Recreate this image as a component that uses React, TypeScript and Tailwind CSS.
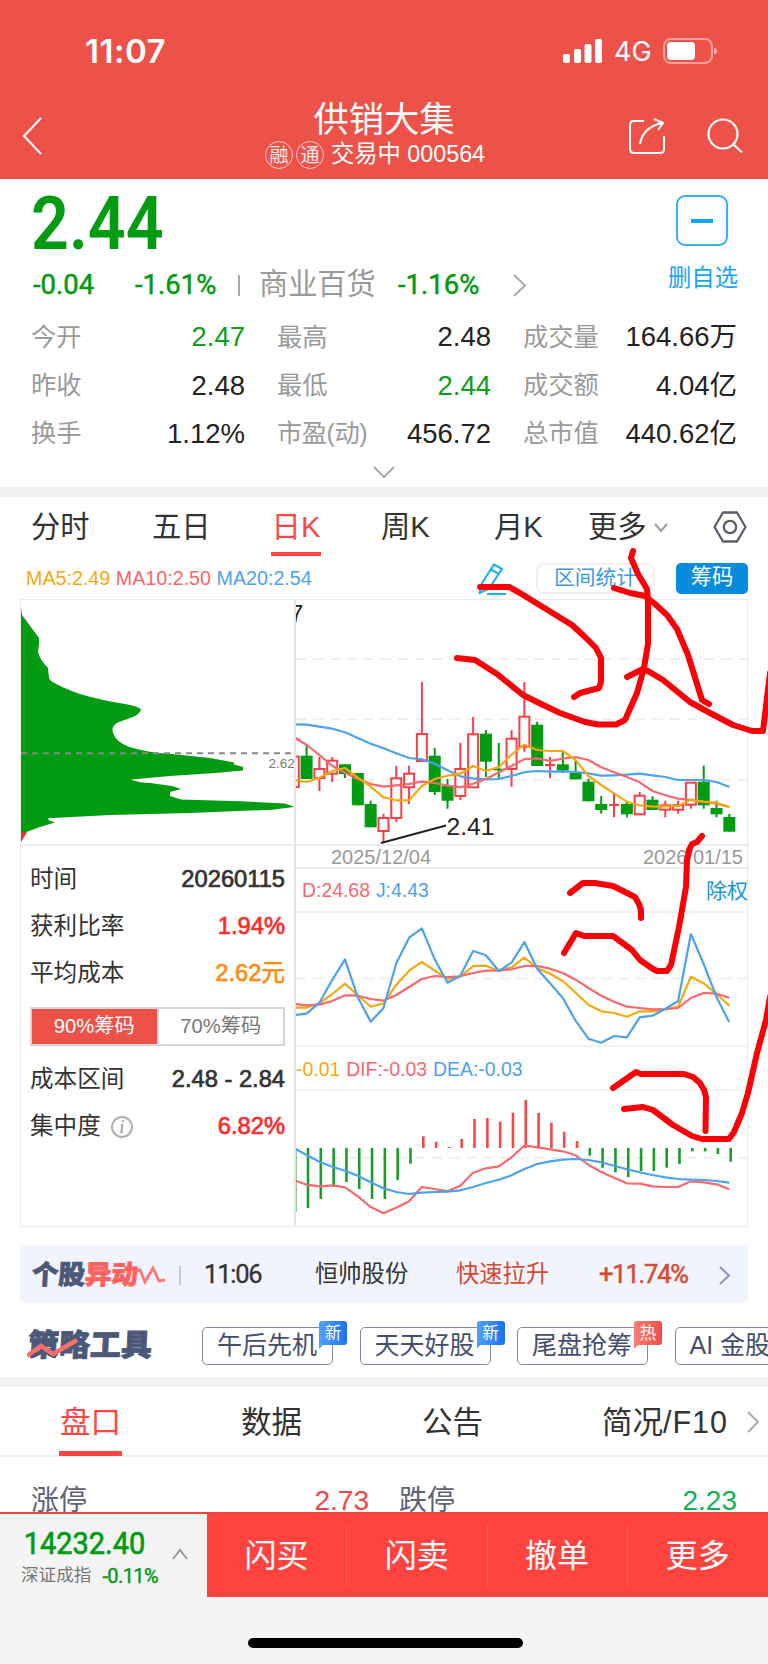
import type { ReactNode } from 'react';
import { clsx } from 'clsx';

const STEP = 12.81;
const FIRST_X = 306.6;

type Candle = [up: boolean, high: number, top: number, bottom: number, low: number];

const candles: Candle[] = [
  [true, 756.6, 756.6, 787, 787],
  [false, 745, 755.7, 779, 779],
  [true, 757, 769, 778, 791],
  [true, 757, 760.7, 773.7, 782],
  [false, 764.3, 764.3, 774, 778],
  [false, 773, 773, 805.3, 805.3],
  [false, 800.7, 804, 827.3, 827.3],
  [true, 814, 818, 831, 843],
  [true, 765.7, 778.3, 818, 822],
  [true, 765.7, 773.7, 787.3, 804],
  [true, 682, 734, 761, 761],
  [false, 748, 755.7, 792, 795],
  [false, 779, 786, 800.7, 808.7],
  [true, 743, 769, 796, 799.7],
  [true, 717, 734.3, 787.3, 787.3],
  [false, 730, 733.7, 761.7, 777],
  [false, 743, 768.7, 770.3, 779],
  [true, 730, 738.7, 769, 786.7],
  [true, 682, 716.7, 746.7, 751.7],
  [false, 721.7, 724.7, 766, 766],
  [true, 756.7, 765, 765, 778],
  [false, 751.7, 764.3, 770.7, 773],
  [false, 760.7, 773, 779.3, 779.3],
  [false, 778.7, 781.7, 801.3, 801.3],
  [false, 796, 804, 810, 813.7],
  [true, 793.3, 805, 805, 817.3],
  [false, 801.7, 804, 814.3, 817.3],
  [true, 792, 795.7, 814.3, 814.3],
  [false, 796.3, 799.7, 810, 810],
  [true, 800.7, 805.3, 809.7, 817.3],
  [true, 800.7, 805.3, 809.7, 813.7],
  [true, 782.3, 782.7, 804.7, 808.7],
  [false, 765.7, 781.7, 805.3, 808.7],
  [false, 800.7, 808, 814.3, 817.3],
  [false, 814, 817, 831.7, 831.7],
];

const ma20 = [724.3, 724.7, 726.7, 728.7, 732.3, 738, 743.7, 748.3, 753.3, 758, 759.3, 763.7, 770.3, 776.3, 778.3, 779.3, 779, 776, 772.2, 771, 771.7, 771.3, 772, 773.3, 775.7, 775.3, 774.7, 773.7, 775.3, 777, 780, 780, 780, 782, 787];
const ma10 = [737, 745, 755, 765.7, 772.7, 779, 784, 786.7, 785.3, 784, 781.7, 783, 785.7, 787.3, 783.7, 779, 772.3, 766, 759.2, 758.3, 761, 758.7, 757, 760, 767.3, 772.3, 777, 782.3, 791, 795.3, 798.7, 800, 802, 803.7, 807];
const ma5 = [780, 782, 777.7, 771, 768, 777.7, 786.7, 797.3, 800.3, 800.3, 786, 779, 775.7, 773.7, 766, 771, 767, 754.7, 744.7, 750, 751, 751, 760, 776, 785, 793.3, 801.7, 805.3, 806.7, 806.3, 806, 799.7, 801.7, 802.7, 807];

const lineK = [1007.7, 1007.7, 1003.3, 994, 983.7, 995.3, 1006.7, 1003.3, 984.7, 970.7, 962, 970.7, 979, 976.7, 966, 965.7, 971, 967.3, 957.7, 968, 973.7, 981, 992.7, 1004.7, 1011.3, 1013, 1016.7, 1011.3, 1011.3, 1009.3, 1006.7, 976.7, 983.3, 994, 1005.7];
const lineD = [1004, 1005.3, 1004.7, 1001, 995.3, 995.7, 999, 1000.7, 995, 987, 979, 976, 977, 976.3, 973, 970.7, 970.7, 969.3, 966, 966, 968.7, 973, 979.7, 988, 995.7, 1001.7, 1006.7, 1008, 1009.3, 1009, 1008, 998, 993, 993.7, 997.7];
const lineJ = [1015, 1013.7, 1002.7, 980, 959.3, 997.3, 1021.7, 1008, 963.3, 937.7, 928.3, 959.3, 982.7, 975.7, 951, 955.3, 971, 962.7, 942, 968.7, 983.3, 998, 1020.7, 1038.7, 1042.7, 1036, 1037.3, 1017.3, 1015.7, 1008.7, 1001.3, 934, 964, 997, 1022.3];

const dif = [1180, 1184.7, 1186.3, 1185.3, 1187.3, 1196.3, 1207, 1213.3, 1207.7, 1201.3, 1187, 1189, 1191.3, 1185.7, 1172.7, 1168.3, 1166.3, 1157.3, 1145.5, 1147.3, 1149.3, 1151.3, 1155.3, 1164.7, 1172, 1177.7, 1183.3, 1183.7, 1186.3, 1187, 1187, 1181.3, 1182.3, 1184.3, 1189.3];
const dea = [1148, 1155, 1161.7, 1166.7, 1170.7, 1175.7, 1182.3, 1188.3, 1192, 1194, 1192.7, 1192, 1191.7, 1190.3, 1187, 1183, 1179.7, 1175.3, 1169, 1164, 1161.3, 1159.7, 1159, 1160, 1162.3, 1165.7, 1169.3, 1172.3, 1175, 1177.3, 1179, 1179.7, 1180, 1181, 1182.7];
const macd = [1212, 1208, 1199, 1187, 1182, 1189, 1199, 1199, 1180, 1163.7, 1136.3, 1141.7, 1147, 1139, 1119, 1118, 1121.7, 1112.7, 1100, 1113, 1122.7, 1131.7, 1141, 1155.7, 1167.7, 1172.3, 1177, 1171, 1171, 1167.7, 1164, 1151.3, 1151.3, 1154, 1161.7];

const MACD_ZERO = 1148;

const xAt = (i: number) => FIRST_X + (i - 1) * STEP;
const toPoints = (ys: number[]) => ys.map((y, i) => `${xAt(i).toFixed(1)},${y}`).join(' ');

const doodles = [
  '480,587 509,587 520,593 572,625 585,637 596,648 601,658 601,682 599,688 580,693 574,697',
  '457,658 475,660 497,674 523,695 537,702 560,713 585,722 598,724.5 616,724.5 625,720 637,693 644,668 648,644 648,600 647,589 638,574 631,558 633,551',
  '614,588 630,593 645,596 655,604 667,615 677,629 688,655 702,700 709,704',
  '627,677 642,669.5 648,671 663,680 690,702 710,713 733,725 752,731 763,731 770,673',
  '570,893 583,883 595,883 613,886 623,891 635,897 639,904 641,910 641,918',
  '564,953 576,933 584,936 613,936 632,950 640,960 653,969 657,971 667,971 671,965 679,927 686,887 687,860 689,850 692,844 697,842 702,836',
  '613,1088 636,1072 641,1074 684,1074 693,1077 700,1083 704,1090 706,1097 705.5,1131',
  '624,1109 643,1107 653,1110 673,1125 692,1136 702,1139 729,1139 734,1132 742,1113 748,1093 757,1053 766,1020 770,997',
];

const quotes = [
  [
    { label: '今开', value: '2.47', green: true },
    { label: '最高', value: '2.48' },
    { label: '成交量', value: '164.66万' },
  ],
  [
    { label: '昨收', value: '2.48' },
    { label: '最低', value: '2.44', green: true },
    { label: '成交额', value: '4.04亿' },
  ],
  [
    { label: '换手', value: '1.12%' },
    { label: '市盈(动)', value: '456.72' },
    { label: '总市值', value: '440.62亿' },
  ],
];

const tools = [
  { name: '午后先机', badge: '新' },
  { name: '天天好股', badge: '新' },
  { name: '尾盘抢筹', badge: '热' },
  { name: 'AI 金股', badge: '热' },
];

function Chevron({ d, className }: { d: string; className: string }) {
  return (
    <svg className={clsx('shrink-0 overflow-visible', className)} fill="none" stroke="currentColor" strokeWidth={2}>
      <path d={d} />
    </svg>
  );
}

function Line({ ys, color }: { ys: number[]; color: string }) {
  return <polyline points={toPoints(ys)} fill="none" stroke={color} strokeWidth={2.2} strokeLinejoin="round" />;
}

function Header() {
  return (
    <header className="h-[179px] bg-[#ed5249] text-white">
      <div className="flex h-[102px] items-center pl-[85px] pr-[50px]">
        <span className="font-[Inter] text-[33px] font-semibold leading-none tracking-[0.5px]">11:07</span>
        <svg className="ml-auto h-6 w-10" viewBox="0 0 40 24" fill="currentColor">
          <rect x="0" y="15" width="7" height="9" rx="2" />
          <rect x="11" y="10" width="7" height="14" rx="2" />
          <rect x="21.500" y="5" width="7" height="19" rx="2" />
          <rect x="32" y="0" width="7" height="24" rx="2" />
        </svg>
        <span className="ml-[11px] w-[49px] font-[Inter] text-[27px] leading-none">4G</span>
        <svg className="h-[26px] w-[55px]" viewBox="0 0 55 26" fill="none">
          <rect x="1" y="1" width="48" height="24" rx="7" stroke="#fff" strokeOpacity={0.45} strokeWidth={2} />
          <rect x="4" y="4" width="28" height="18" rx="4" fill="#fff" />
          <path d="M51 9.500q3 1 3 3.500t-3 3.500z" fill="#fff" fillOpacity={0.5} />
        </svg>
      </div>

      <div className="-mt-px flex items-start pl-[22px] pr-[25px]">
        <Chevron className="mt-[16px] h-[38px] w-[20px]" d="M19 1L2 19L19 37" />
        <div className="ml-[214px] flex w-[240px] shrink-0 flex-col items-center">
          <h1 className="pl-4 text-[35.300px] leading-[38px]">供销大集</h1>
          <div className="mt-[1px] flex h-[30px] items-center gap-[3px] pr-[2px] text-[23.300px] leading-none">
            <Badge>融</Badge>
            <Badge>通</Badge>
            <span className="ml-1 whitespace-nowrap">交易中 000564</span>
          </div>
        </div>
        <svg className="ml-auto mt-[17px] h-9 w-[38px]" viewBox="0 0 38 36" fill="none" stroke="currentColor" strokeWidth={2}>
          <path d="M16 3H6Q2 3 2 7V31Q2 35 6 35H32Q36 35 36 31V18" />
          <path d="M12 26Q15 9 34 5M26 1L35 5L30 12" />
        </svg>
        <svg className="ml-[41px] mt-[17px] h-9 w-9" viewBox="0 0 36 36" fill="none" stroke="currentColor" strokeWidth={2.2}>
          <circle cx="16" cy="16" r="14.500" />
          <path d="M26 26L35 34.500" />
        </svg>
      </div>
    </header>
  );
}

function Badge({ children }: { children: ReactNode }) {
  return (
    <span className="flex size-7 items-center justify-center rounded-full border-[1.500px] border-white/70 text-[19px] leading-none text-white/90">
      {children}
    </span>
  );
}

function Quote() {
  return (
    <section className="h-[308px]">
      <div className="flex h-[127px] justify-between pl-[33px] pr-[30px]">
        <div className="font-[Roboto,'Noto_Sans_CJK_SC',sans-serif] text-[#029b12]">
          <div className="-ml-[2px] mt-[6px] h-[76px] origin-left scale-x-[0.885] text-[75px] font-semibold leading-[76px]">2.44</div>
          <div className="mt-[10px] flex h-[28px] items-center text-[27.500px] leading-none [-webkit-text-stroke:0.5px]">
            <span className="w-[102px]">-0.04</span>
            <span className="w-[103px]">-1.61%</span>
            <span className="h-[21px] w-[2px] bg-[#aaa]" />
            <span className="ml-[19px] w-[139px] text-[29.200px] text-[#999] [-webkit-text-stroke:0]">商业百货</span>
            <span className="w-[115px]">-1.16%</span>
            <Chevron className="h-[21px] w-[14px] text-[#aaa]" d="M1 0L12 10.500L1 21" />
          </div>
        </div>
        <div className="flex w-[70px] flex-col items-center text-[#13a6f5]">
          <div className="ml-[-2px] mt-4 flex h-[51px] w-[52px] items-center justify-center rounded-[9px] border-2 border-[#35b0f6]">
            <span className="h-1 w-[22px] bg-[#10a5fa]" />
          </div>
          <span className="mt-[21px] whitespace-nowrap text-[23.300px] leading-none">删自选</span>
        </div>
      </div>

      <div className="mt-[7px] grid h-[145px] grid-rows-3 px-[31px]">
        {quotes.map((row, r) => (
          <div key={r} className="grid grid-cols-[214px_214px_214px] items-center gap-x-8">
            {row.map((q) => (
              <div key={q.label} className="flex items-center justify-between whitespace-nowrap leading-none">
                <span className={clsx('text-[25.300px] text-[#9a9a9a]', q.label.length > 4 && 'tracking-[-0.5px]')}>{q.label}</span>
                <span className={clsx('text-[27.500px]', q.green ? 'text-[#0a9f1c]' : 'text-[#222]')}>{q.value}</span>
              </div>
            ))}
          </div>
        ))}
      </div>
      <div className="flex justify-center pt-[9px]">
        <Chevron className="h-[11px] w-[22px] text-[#aaa]" d="M1 0L11 10L21 0" />
      </div>
    </section>
  );
}

function PeriodTabs() {
  return (
    <nav className="flex h-[62px] items-start pl-[31px] pt-[13px] text-[29.300px] leading-[34px] text-[#333]">
      <span className="w-[121px]">分时</span>
      <span className="w-[119px]">五日</span>
      <span className="flex w-[50px] flex-col items-center text-[#ff4643]">
        日K
        <span className="mt-[8px] h-1 w-full bg-[#ff4643]" />
      </span>
      <span className="ml-[60px] w-[113px]">周K</span>
      <span className="w-[94px]">月K</span>
      <span className="w-[66px]">更多</span>
      <Chevron className="mt-[14px] h-[7px] w-[14px] text-[#999]" d="M1 0L7 7L13 0" />
      <svg className="ml-[45px] mt-[1px] h-[32px] w-[34px]" viewBox="0 0 34 32" fill="none" stroke="#5d5d6e" strokeWidth={2.3}>
        <path d="M10 1.500H24L32.500 16L24 30.500H10L1.500 16Z" strokeLinejoin="round" />
        <circle cx="17" cy="16" r="6.200" />
      </svg>
    </nav>
  );
}

function ChartToolbar() {
  return (
    <div className="flex h-[39px] items-center pl-[26px] pr-5">
      <div className="flex gap-[5.500px] whitespace-nowrap text-[19.700px] leading-none">
        <span className="text-[#f5a80f]">MA5:2.49</span>
        <span className="text-[#f9686c]">MA10:2.50</span>
        <span className="text-[#4da2ef]">MA20:2.54</span>
      </div>
      <svg className="ml-auto h-8 w-[30px]" viewBox="0 0 30 32" fill="none" stroke="#23aef5" strokeWidth={2.2}>
        <path d="M17 1.500L25 6L12 25.500L2.500 30L5 20Z" strokeLinejoin="round" />
        <path d="M14 6.500L22 11M10 31H29" />
      </svg>
      <span className="ml-[29px] flex h-[31px] w-[119px] items-center justify-center rounded-lg border-2 border-[#f1f1f1] pb-px text-[20.800px] leading-none text-[#3c98ea]">
        区间统计
      </span>
      <span className="ml-[21px] flex h-[31px] w-[72px] items-center justify-center rounded-[5px] bg-[#078bdd] pb-px text-[21.300px] leading-none text-white">
        筹码
      </span>
    </div>
  );
}

function ChipDistribution() {
  return (
    <svg className="block h-[244px] w-[273px]" viewBox="21 600 273 244">
      <path
        fill="#029b12"
        d="M20.500 603L22 615L39 638V644L38 652Q40 660 48 668L49 678L51 681Q60 687 80 694Q100 700 125 704Q141 707 141 710Q139 715 130 718L119 722Q112 725 112.500 731Q115 743 133 748Q150 753 172 754L210 758L234 762.500V764.500L243 767V770.500L215 773L170 776L131 779.500Q140 783 150 783L172 786L181 789L170 792V796L181 799.500L240 801.300L285 803.500L295 807L272 809.700L190 813L110 815L48 818.300L49 820.500L55 822.500L40 827L25 832.500H20.500Z"
      />
      <path fill="#ff2a2f" d="M20.500 832H27L20.500 843Z" />
      <path stroke="#888" strokeWidth={2} strokeDasharray="6 5" d="M21 753.300H295" />
      <text x="268.500" y="767.500" fontSize="13.500" fill="#777">2.62</text>
    </svg>
  );
}

function StatRow({ label, value, color }: { label: ReactNode; value: string; color: string }) {
  return (
    <div className="flex h-[47.300px] items-center justify-between leading-none">
      <span className="flex items-center text-[23.600px] text-[#333]">{label}</span>
      <span className={clsx('text-[23.700px] [-webkit-text-stroke:0.7px]', color)}>{value}</span>
    </div>
  );
}

function ChipPanel() {
  return (
    <div className="h-[382px] border-t-2 border-[#ececec] px-[9px] pt-[10px]">
      <StatRow label="时间" value="20260115" color="text-[#333]" />
      <StatRow label="获利比率" value="1.94%" color="text-[#ff2a2f]" />
      <StatRow label="平均成本" value="2.62元" color="text-[#ff8a12]" />
      <div className="mb-[10px] mt-[9px] flex h-[39px] border-2 border-[#d6d6d6] text-[20.200px] leading-none text-[#777]">
        <span className="flex flex-1 items-center justify-center bg-[#ed5249] text-white">90%筹码</span>
        <span className="flex flex-1 items-center justify-center border-l-2 border-[#d6d6d6]">70%筹码</span>
      </div>
      <StatRow label="成本区间" value="2.48 - 2.84" color="text-[#333]" />
      <StatRow
        label={
          <>
            集中度
            <span className="ml-[10px] flex size-[22px] items-center justify-center rounded-full border-2 border-[#b0b0b0] font-['Liberation_Serif',serif] text-[18px] italic text-[#999]">
              i
            </span>
          </>
        }
        value="6.82%"
        color="text-[#ff2a2f]"
      />
    </div>
  );
}

function CandleChart() {
  return (
    <svg className="block h-[244px] w-[451px]" viewBox="296 600 451 244">
      <path stroke="#ececec" strokeWidth={1.500} strokeDasharray="10 7" d="M296 659H748M296 719.300H748M296 779.700H748" />
      {candles.map(([up, high, top, bottom, low], i) => {
        const x = xAt(i);
        if (!up) {
          return (
            <g key={i} fill="#029b12">
              <rect x={x - 1} y={high} width={2} height={low - high} />
              <rect x={x - 6} y={top} width={12} height={bottom - top} />
            </g>
          );
        }
        return (
          <g key={i} fill="none" stroke="#fb3f46" strokeWidth={2}>
            <path d={`M${x} ${high}V${top}M${x} ${bottom}V${low}`} />
            {top === bottom ? <path d={`M${x - 5} ${top}h10`} /> : <rect x={x - 5} y={top} width={10} height={bottom - top} />}
          </g>
        );
      })}
      <Line ys={ma20} color="#4da2ef" />
      <Line ys={ma10} color="#f9686c" />
      <Line ys={ma5} color="#f5a80f" />
      <path stroke="#222" strokeWidth={2} d="M381 843L446 825.500" />
      <text x="446.500" y="835" fontSize="24.700" fill="#222">2.41</text>
      <text x="290" y="622" fontSize="24" fill="#222">7</text>
    </svg>
  );
}

function KdjChart() {
  return (
    <svg className="block h-[136px] w-[451px] border-y-2 border-[#f2f2f2]" viewBox="296 913 451 132">
      <path stroke="#ececec" strokeWidth={1.500} strokeDasharray="10 7" d="M296 978.500H748" />
      <Line ys={lineK} color="#f5a80f" />
      <Line ys={lineD} color="#f9686c" />
      <Line ys={lineJ} color="#4da2ef" />
    </svg>
  );
}

function MacdChart() {
  return (
    <svg className="block h-[137px] w-[451px] border-t-2 border-[#f2f2f2]" viewBox="296 1091 451 135">
      <path stroke="#ececec" strokeWidth={1.500} strokeDasharray="10 7" d="M296 1157.700H748" />
      {macd.map((y, i) => (
        <path
          key={i}
          d={`M${xAt(i) + 1.4} ${MACD_ZERO}V${y}`}
          stroke={y > MACD_ZERO ? '#1a9d2b' : '#f9464b'}
          strokeWidth={2.6}
        />
      ))}
      <Line ys={dif} color="#f9686c" />
      <Line ys={dea} color="#4da2ef" />
    </svg>
  );
}

function Charts() {
  return (
    <section className="mx-5 mt-px flex h-[628px] border border-[#ebebeb] text-[19.400px] leading-none">
      <div className="w-[275px] shrink-0 border-r-2 border-[#e6e6e6]">
        <ChipDistribution />
        <ChipPanel />
      </div>
      <div className="min-w-0 flex-1">
        <CandleChart />
        <div className="flex h-[25px] items-center justify-between border-y-2 border-[#ececec] pl-[35px] pr-[4px] text-[20px] text-[#999]">
          <span>2025/12/04</span>
          <span>2026/01/15</span>
        </div>
        <div className="flex h-[42px] items-center pl-[6px] pt-px">
          <span className="text-[#f9686c]">D:24.68</span>
          <span className="ml-[6px] text-[#4da2ef]">J:4.43</span>
          <span className="-mr-px ml-auto text-[21px] text-[#1c93de]">除权</span>
        </div>
        <KdjChart />
        <div className="flex h-[42px] items-center gap-[6px] pt-[3px]">
          <span className="text-[#f5a80f]">-0.01</span>
          <span className="text-[#f9686c]">DIF:-0.03</span>
          <span className="text-[#4da2ef]">DEA:-0.03</span>
        </div>
        <MacdChart />
      </div>
    </section>
  );
}

function NewsBar() {
  return (
    <section className="mx-5 mt-[18px] flex h-[58px] items-center rounded bg-[#f1f4fc] pl-[12px] pr-[18px] pt-[2px] font-[Roboto,'Noto_Sans_CJK_SC',sans-serif] text-[25.500px] leading-none text-[#333]">
      <span className="-skew-x-3 text-[26.500px] font-black text-[#4c5878] [-webkit-text-stroke:0.8px]">
        个股<span className="text-[#ff625e]">异动</span>
      </span>
      <svg className="-ml-px h-[20px] w-[28px]" viewBox="0 0 28 20" fill="none" stroke="#ff7774" strokeWidth={2.8}>
        <path d="M0 6L3 5L8 17L16 3L22 16L28 15" />
      </svg>
      <span className="ml-[14px] h-[19px] w-[2px] bg-[#c3c9de]" />
      <span className="ml-[23px] w-[111px] tracking-[-1.2px] [-webkit-text-stroke:0.3px]">11:06</span>
      <span className="w-[141px] text-[23.300px]">恒帅股份</span>
      <span className="w-[143px] text-[23.300px] text-[#d94a30]">快速拉升</span>
      <span className="tracking-[-1.2px] text-[#d94a30] [-webkit-text-stroke:0.5px]">+11.74%</span>
      <Chevron className="ml-auto h-[17px] w-[11px] text-[#8a93bb]" d="M1 0L10 8.500L1 17" />
    </section>
  );
}

function Tools() {
  return (
    <section className="flex h-[74px] overflow-hidden pl-[28px]">
      <div className="relative mt-[26px] h-[34px] w-[174px] shrink-0">
        <span className="inline-block -skew-x-3 text-[31px] font-black leading-[34px] text-[#4c5878] [-webkit-text-stroke:0.8px]">策略工具</span>
        <svg className="absolute -left-px top-[9px] h-[20px] w-[52px]" viewBox="0 0 52 20" fill="none" stroke="#f96f6a" strokeWidth={4.5}>
          <path d="M0 18L14 8L26 16L50 2" />
        </svg>
      </div>
      <div className="mt-[24px] flex gap-[26.500px]">
        {tools.map((t) => (
          <div
            key={t.name}
            className="relative flex h-[38px] w-[131px] shrink-0 items-center whitespace-nowrap rounded-[5px] border-[1.500px] border-[#8389a3] pb-px pl-[14px] text-[25px] leading-none text-[#444f70]"
          >
            {t.name}
            <span
              className={clsx(
                'absolute -right-[15px] -top-[7px] flex h-6 w-7 items-center justify-center rounded-[3px] rounded-bl-none bg-linear-to-r text-[16.500px] text-white',
                t.badge === '新' ? 'from-[#50a2fb] to-[#1d70ef]' : 'from-[#fb7c73] to-[#ee4d48]',
              )}
            >
              {t.badge}
              <span className={clsx('absolute left-0 top-full size-1 [clip-path:polygon(0_0,100%_0,0_100%)]', t.badge === '新' ? 'bg-[#50a2fb]' : 'bg-[#fb7c73]')} />
            </span>
          </div>
        ))}
      </div>
    </section>
  );
}

function DetailTabs() {
  return (
    <section className="border-t-[10px] border-[#f1f1f1]">
      <div className="flex h-[70px] items-start border-b-2 border-[#ececec] pl-[59px] pt-[16px] text-[30.500px] leading-[38px] text-[#333]">
        <span className="flex h-[53px] w-[63px] flex-col items-center justify-between text-[#ff4643]">
          盘口
          <span className="h-[5px] w-full shrink-0 bg-[#ff4643]" />
        </span>
        <span className="ml-[119px] w-[181px]">数据</span>
        <span className="w-[180px]">公告</span>
        <span className="w-[145px]">
          简况<span className="tracking-[1px]">/F10</span>
        </span>
        <Chevron className="mt-[9px] h-[20px] w-[13px] text-[#aaa]" d="M1 0L11 10L1 20" />
      </div>
      <div className="flex h-[55px] justify-between overflow-hidden px-[31px] pt-[27px] text-[28px] leading-[34px] text-[#5c6178]">
        <span className="flex w-[338px] justify-between">
          涨停<span className="text-[#fb4248]">2.73</span>
        </span>
        <span className="flex w-[338px] justify-between">
          跌停<span className="text-[#12b150]">2.23</span>
        </span>
      </div>
    </section>
  );
}

function BottomBar() {
  return (
    <footer className="h-[152px] bg-[#f4f4f4]">
      <div className="flex h-[85px] border-t-2 border-[#f5443f]">
        <div className="flex w-[207px] items-center pl-[21px] font-[Roboto,'Noto_Sans_CJK_SC',sans-serif]">
          <div className="w-[151px] pt-px leading-none">
            <div className="origin-left scale-x-[0.905] pl-[3px] text-[32px] text-[#029b12] [-webkit-text-stroke:0.7px]">14232.40</div>
            <div className="mt-[7px] flex items-center gap-[11px] whitespace-nowrap">
              <span className="text-[17.600px] text-[#777]">深证成指</span>
              <span className="text-[20px] tracking-[-0.6px] text-[#029b12] [-webkit-text-stroke:0.4px]">-0.11%</span>
            </div>
          </div>
          <Chevron className="-mt-[2px] h-[9px] w-[16px] text-[#999]" d="M1 9L8 0L15 9" />
        </div>
        <div className="grid flex-1 grid-cols-4 items-center bg-[#ff443f] text-center text-[32px] leading-[62px] text-white">
          {['闪买', '闪卖', '撤单', '更多'].map((label, i) => (
            <span key={label} className={clsx(i < 3 && 'border-r border-[#ff5f59]')}>
              {label}
            </span>
          ))}
        </div>
      </div>
      <div className="mx-auto mt-[41px] h-[10px] w-[275px] translate-x-px rounded-full bg-black" />
    </footer>
  );
}

export default function App() {
  return (
    <div className="relative h-[1664px] w-[768px] overflow-hidden bg-white font-['Liberation_Sans','Noto_Sans_CJK_SC',sans-serif]">
      <Header />
      <Quote />
      <div className="h-[10px] bg-[#f0f0f0]" />
      <PeriodTabs />
      <ChartToolbar />
      <Charts />
      <NewsBar />
      <Tools />
      <DetailTabs />
      <BottomBar />

      {/* freehand marker layer */}
      <svg className="pointer-events-none absolute inset-0 h-[1664px] w-[768px]" viewBox="0 0 768 1664" fill="none" stroke="#fb0007" strokeWidth={6} strokeLinecap="round" strokeLinejoin="round">
        {doodles.map((points) => (
          <polyline key={points} points={points} />
        ))}
      </svg>
    </div>
  );
}
